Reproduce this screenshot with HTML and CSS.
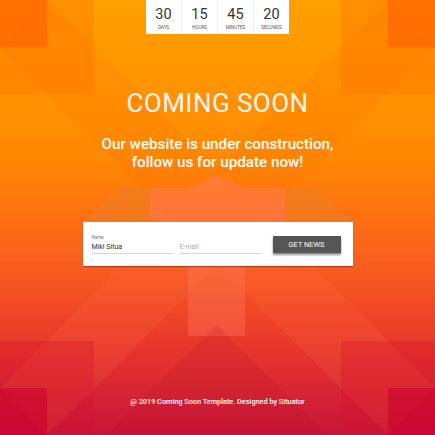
FILE: index.html
```html
<!DOCTYPE html>
<html lang="en">
<head>
<meta charset="utf-8">
<title>Coming Soon</title>
<link rel="stylesheet" href="styles.css">
</head>
<body>
<div class="page">
  <svg class="bg" viewBox="0 0 435 435" preserveAspectRatio="none" aria-hidden="true">
    <defs>
      <linearGradient id="g" x1="0" y1="0" x2="0" y2="1">
        <stop offset="0" stop-color="#ffa000"/>
        <stop offset="0.35" stop-color="#ff8a00"/>
        <stop offset="0.6" stop-color="#fa5f1e"/>
        <stop offset="0.8" stop-color="#e8362c"/>
        <stop offset="1" stop-color="#c8153a"/>
      </linearGradient>
    </defs>
    <rect x="0" y="0" width="435" height="435" fill="url(#g)"/>
    <!-- diagonal bands -->
    <polygon points="0,47 47,0 217,170 217,264" fill="#ff6a00" opacity="0.14"/>
    <polygon points="435,47 388,0 217,170 217,264" fill="#ff6a00" opacity="0.14"/>
    <polygon points="0,388 47,435 217,265 170,217" fill="#ff7040" opacity="0.18"/>
    <polygon points="435,388 388,435 217,265 264,217" fill="#ff7040" opacity="0.18"/>
    <!-- central glow -->
    <rect x="150" y="188" width="135" height="34" fill="#ff7a60" opacity="0.5"/>
    <polygon points="188,188 217,175 245,188" fill="#ff7a60" opacity="0.5"/>
    <rect x="188" y="266" width="57" height="70" fill="#ff7a60" opacity="0.35"/>
    <polygon points="83,222 120,188 150,188 150,222" fill="#e8802a" opacity="0.45"/>
    <polygon points="353,222 315,188 285,188 285,222" fill="#e8802a" opacity="0.45"/>
    <!-- bottom triangle -->
    <polygon points="217,325 327,435 107,435" fill="#b0102a" opacity="0.15"/>
    <!-- corner squares -->
    <rect x="0" y="0" width="94" height="94" fill="#ff6a00" opacity="0.3"/>
    <rect x="0" y="0" width="47" height="47" fill="#ff5a00" opacity="0.55"/>
    <rect x="341" y="0" width="94" height="94" fill="#ff6a00" opacity="0.3"/>
    <rect x="388" y="0" width="47" height="47" fill="#ff5a00" opacity="0.55"/>
    <rect x="0" y="341" width="94" height="94" fill="#d01030" opacity="0.3"/>
    <rect x="0" y="388" width="47" height="47" fill="#c80030" opacity="0.55"/>
    <rect x="341" y="341" width="94" height="94" fill="#d01030" opacity="0.3"/>
    <rect x="388" y="388" width="47" height="47" fill="#c80030" opacity="0.55"/>
  </svg>

  <div class="content">
    <div class="countdown">
      <div class="cell"><span class="num">30</span><span class="lbl">DAYS</span></div>
      <div class="cell"><span class="num">15</span><span class="lbl">HOURS</span></div>
      <div class="cell"><span class="num">45</span><span class="lbl">MINUTES</span></div>
      <div class="cell"><span class="num">20</span><span class="lbl">SECONDS</span></div>
    </div>

    <h1 class="title">COMING SOON</h1>
    <p class="subtitle">Our website is under construction,<br>follow us for update now!</p>

    <form class="card">
      <label class="field">
        <span class="flabel">Name</span>
        <span class="finput">Mikl Situa</span>
      </label>
      <label class="field">
        <span class="flabel"></span>
        <span class="finput placeholder">E-mail</span>
      </label>
      <span class="btn">GET NEWS</span>
    </form>

    <p class="footer">@ 2019 Coming Soon Template. Designed by Situator</p>
  </div>
</div>
</body>
</html>
```

FILE: styles.css
```css
* { box-sizing: border-box; }
html, body { margin: 0; padding: 0; }
body {
  font-family: Roboto, "Liberation Sans", Arial, sans-serif;
  width: 435px;
  height: 435px;
  overflow: hidden;
}
.page {
  position: relative;
  width: 435px;
  height: 435px;
  overflow: hidden;
  background: #ff8a00;
}
.bg {
  position: absolute;
  left: 0;
  top: 0;
  width: 435px;
  height: 435px;
  display: block;
}
.content {
  position: relative;
  height: 100%;
  display: flex;
  flex-direction: column;
  align-items: center;
}
.countdown {
  display: flex;
  background: #fff;
  height: 34px;
  width: 143px;
}
.cell {
  flex: 1;
  display: flex;
  flex-direction: column;
  align-items: center;
  border-left: 1px solid #eeeeee;
}
.cell:first-child { border-left: none; }
.num {
  font-size: 14.5px;
  line-height: 14px;
  margin-top: 8px;
  color: #333;
}
.lbl {
  font-size: 4.6px;
  line-height: 5px;
  margin-top: 3px;
  color: #555;
}
.title {
  margin: 54px 0 0;
  font-size: 26px;
  line-height: 30px;
  font-weight: 400;
  color: #fff4f6;
  letter-spacing: 0.45px;
}
.subtitle {
  margin: 18px 0 0;
  font-size: 15.2px;
  line-height: 17.5px;
  font-weight: 500;
  color: #fff;
  text-align: center;
}
.card {
  margin: 51px 0 0;
  width: 270px;
  height: 44px;
  background: #fff;
  display: flex;
  align-items: flex-end;
  padding: 0 12px 12px 9px;
  box-shadow: 0 1px 1px rgba(150, 30, 0, 0.6);
}
.field {
  width: 81px;
  display: flex;
  flex-direction: column;
  border-bottom: 1.5px solid #d6d6d6;
  margin-right: 7px;
}
.field + .field { margin-right: 12px; }
.flabel {
  font-size: 4.5px;
  line-height: 6px;
  height: 6px;
  color: #777;
}
.finput {
  font-size: 7px;
  line-height: 12px;
  color: #333;
}
.finput.placeholder { color: #aaa; }
.btn {
  width: 68px;
  height: 17px;
  margin-bottom: 1px;
  background: #555;
  color: #fff;
  font-size: 7.4px;
  line-height: 17px;
  text-align: center;
  box-shadow: 0 1.5px 2px rgba(0, 0, 0, 0.45);
}
.footer {
  margin: auto 0 28px;
  font-size: 7.3px;
  line-height: 10px;
  font-weight: 500;
  color: #fff;
}
```
